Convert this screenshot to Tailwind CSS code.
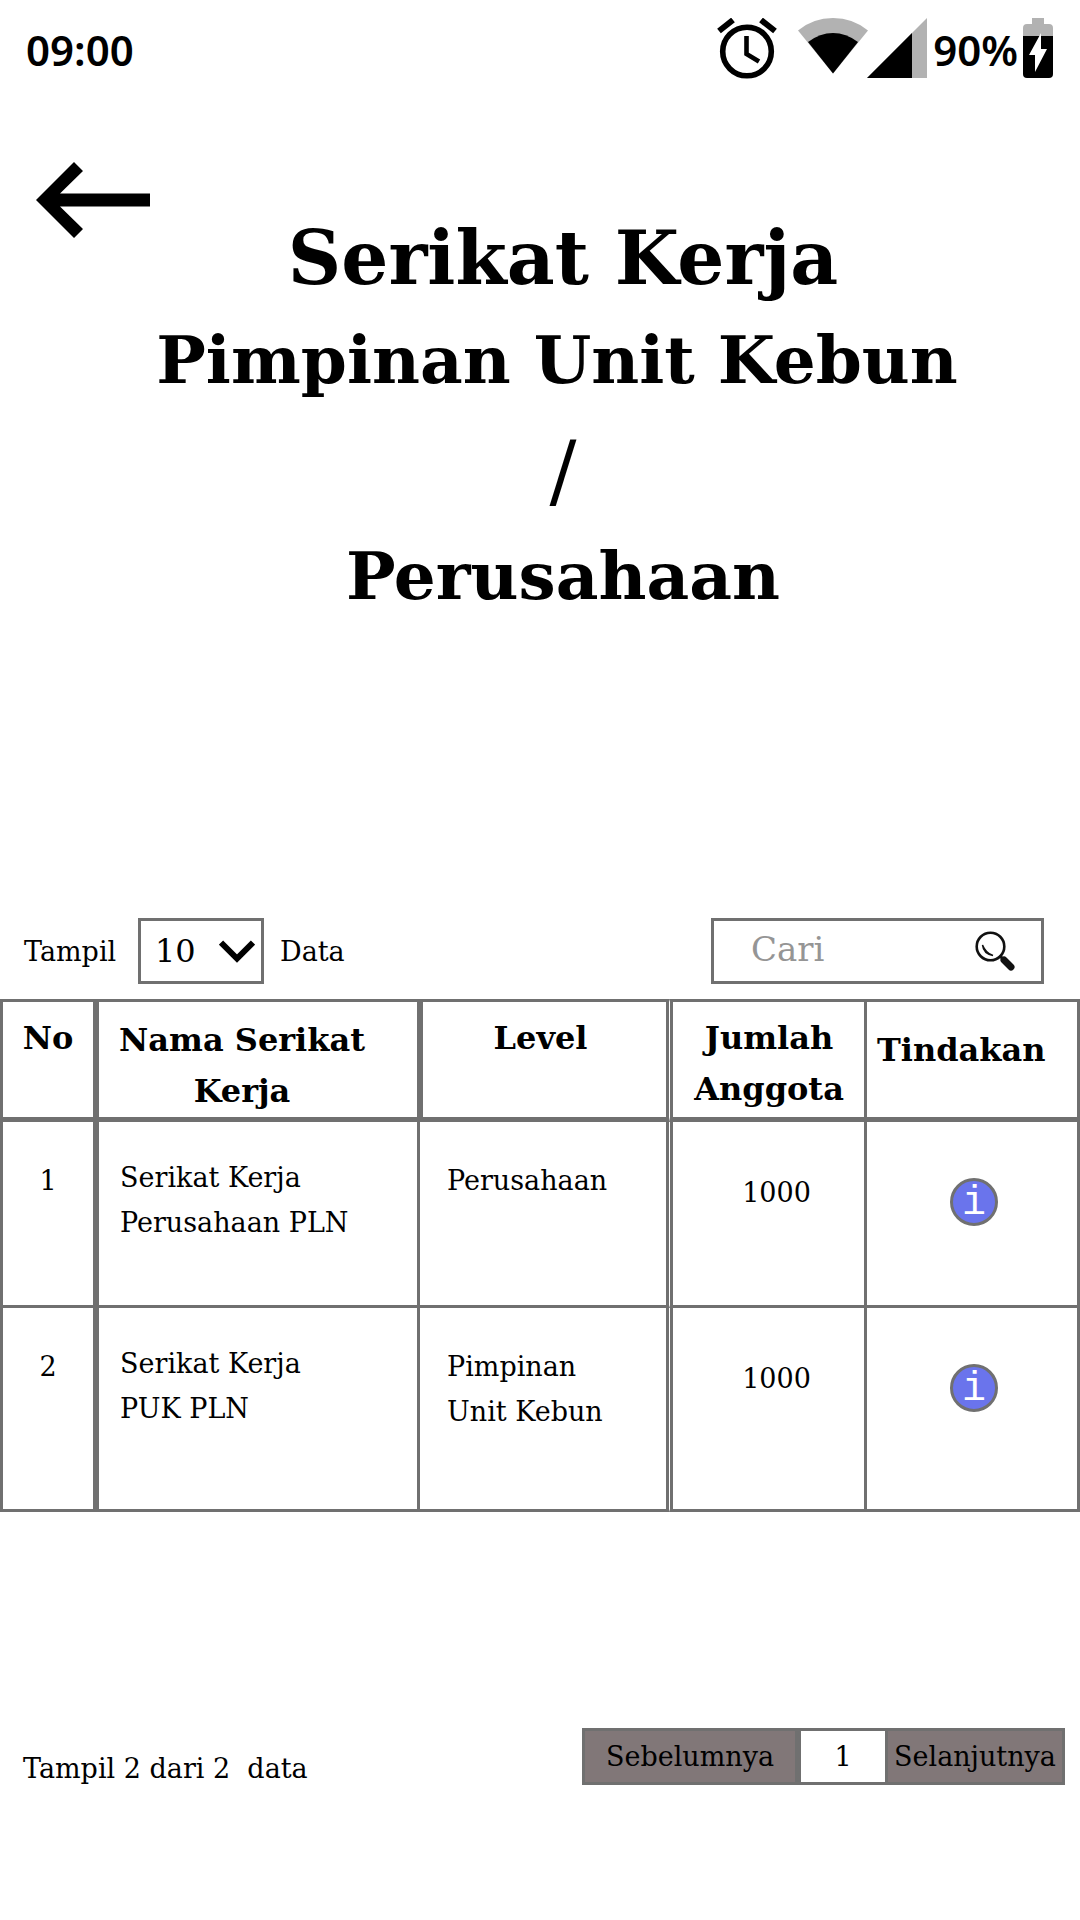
<!DOCTYPE html>
<html lang="id">
<head>
<meta charset="utf-8">
<meta name="viewport" content="width=device-width, initial-scale=1">
<title>Serikat Kerja</title>
<script src="https://cdn.jsdelivr.net/npm/@tailwindcss/browser@4"></script>
</head>
<body class="min-h-screen bg-white text-black font-['DejaVu_Serif',serif] text-[27px] leading-[45px]">

<!-- Status bar -->
<div class="flex items-start justify-between pt-[18px] pl-[26px] pr-[27px] font-['Noto_Sans',sans-serif] font-semibold text-[42px] leading-[64px]">
  <time>09:00</time>
  <div class="flex items-start">
    <svg class="w-[60px] h-[62px] mr-[21px]" viewBox="717 18 60 62" fill="none" stroke="#000" aria-hidden="true">
      <circle cx="747" cy="51.5" r="24.3" stroke-width="5.6"/>
      <path d="M719 31 733 20M775 31 761 20" stroke-width="6"/>
      <path d="M746.500 36V54L759 61.500" stroke-width="4.600"/>
    </svg>
    <svg class="w-[70px] h-[60px] -mr-px" viewBox="798 18 70 60" aria-hidden="true">
      <path d="M798 30.500Q813 18 833 18T868 30.500L833 73.500Z" fill="#b2b2b2"/>
      <path d="M808 42Q820 33 833 33T858 42L833 73.500Z"/>
    </svg>
    <svg class="w-[60px] h-[60px] mr-1.5" viewBox="0 0 60 60" aria-hidden="true">
      <path d="M60 0V60H0Z" fill="#b2b2b2"/>
      <path d="M45 15V60H0Z"/>
    </svg>
    <span>90%</span>
    <svg class="w-[30px] h-[60px] ml-[5px]" viewBox="0 0 30 60" aria-hidden="true">
      <path d="M9 0H21V6H26Q30 6 30 10V18H0V10Q0 6 4 6H9Z" fill="#b2b2b2"/>
      <path d="M0 18H30V56Q30 60 26 60H4Q0 60 0 56Z"/>
      <path d="M18 15V31H24L12 54V37H6Z" fill="#fff"/>
    </svg>
  </div>
</div>

<!-- Back link and heading share one grid cell -->
<header class="grid pt-20">
  <a href="#" aria-label="Kembali" class="col-start-1 row-start-1 justify-self-start ml-9 z-10">
    <svg class="w-[114px] h-[76px]" viewBox="36 162 114 76" aria-hidden="true">
      <path d="M36 200 74 162 83 171 60 193.500H150V206.500H60L83 229 74 238Z"/>
    </svg>
  </a>
  <h1 class="col-start-1 row-start-1 pt-12 pl-[46px] text-center font-bold text-[66px]">
    <span class="block text-[74px] leading-[96px]">Serikat Kerja</span>
    <span class="block -ml-3 leading-[108px]">Pimpinan Unit Kebun</span>
    <span class="block text-[80px] leading-[116px] font-normal">/</span>
    <span class="block leading-[92px]">Perusahaan</span>
  </h1>
</header>

<main>
  <div class="flex items-center justify-between mt-[296px] pl-6 pr-9">
    <div class="flex items-center">
      <label for="jumlah" class="w-[114px]">Tampil</label>
      <div class="grid items-center w-[126px] h-[66px]">
        <select id="jumlah" class="col-start-1 row-start-1 size-full appearance-none border-3 border-[#707070] bg-white pl-3.5 text-[32px]">
          <option>10</option>
          <option>25</option>
          <option>50</option>
        </select>
        <svg class="col-start-1 row-start-1 justify-self-end w-9 h-[23px] mr-[9px] pointer-events-none" viewBox="0 0 36 23" fill="none" stroke="#000" stroke-width="6" aria-hidden="true">
          <path d="M2 2.500 18 18.500 34 2.500"/>
        </svg>
      </div>
      <span class="ml-4">Data</span>
    </div>
    <form class="grid items-center w-[333px] h-[66px]" role="search">
      <input type="search" aria-label="Cari" placeholder="Cari" class="col-start-1 row-start-1 size-full border-3 border-[#707070] bg-white pl-[37px] pr-16 pb-1 text-[34px] placeholder:text-[#959595]">
      <button type="button" aria-label="Cari data" class="col-start-1 row-start-1 justify-self-end mr-[29px]">
        <svg class="w-10 h-10" viewBox="0 0 40 40" fill="none" stroke="#111" stroke-linecap="round" aria-hidden="true">
          <circle cx="15.500" cy="15.500" r="13.800" stroke-width="2.600"/>
          <path d="M7.500 14Q8.500 23 18 24.500Q11 22.500 7.500 14Z" stroke-width="1.500" fill="#111"/>
          <path d="M25.500 25.500 29 29" stroke-width="3"/>
          <path d="M29 29 36 36" stroke-width="7"/>
        </svg>
      </button>
    </form>
  </div>

  <table class="mt-[15px] w-full table-fixed border-separate border-spacing-0 [&_td]:align-top [&_th]:align-top [&_td]:border-[#707070] [&_th]:border-[#707070]">
    <colgroup>
      <col class="w-[9.17%]">
      <col class="w-[29.72%]">
      <col class="w-[23.06%]">
      <col class="w-[18.33%]">
      <col>
    </colgroup>
    <thead class="text-[32px] leading-[51px]">
      <tr class="h-[123px]">
        <th class="border-t-3 border-b-5 border-l-3 border-r-6 pt-[11px]">No</th>
        <th class="border-t-3 border-b-5 border-r-3 pt-[13px] pr-8">Nama Serikat Kerja</th>
        <th class="border-t-3 border-b-5 border-l-3 border-r-3 pt-[11px] pr-2">Level</th>
        <th class="border-t-3 border-b-5 border-r-3 border-l border-l-white! shadow-[inset_3px_0_0_#707070] pt-[11px] pl-1">Jumlah Anggota</th>
        <th class="border-t-3 border-b-5 border-r-3 pt-[23px] pl-2.5 text-left">Tindakan</th>
      </tr>
    </thead>
    <tbody>
      <tr class="h-[186px]">
        <td class="border-b-3 border-l-3 border-r-6 pt-9 text-center">1</td>
        <td class="border-b-3 border-r-3 pt-[33px] pl-[21px] pr-12">Serikat Kerja<br>Perusahaan PLN</td>
        <td class="border-b-3 border-r-3 pt-9 pl-[27px]">Perusahaan</td>
        <td class="border-b-3 border-r-3 border-l border-l-white! shadow-[inset_3px_0_0_#707070] pt-12 pl-[19px] text-center">1000</td>
        <td class="border-b-3 border-r-3 pt-14 pl-1">
          <button type="button" aria-label="Info" class="mx-auto flex size-12 items-center justify-center rounded-full border-3 border-[#707070] bg-[#6a74ec] font-['Liberation_Mono',monospace] text-[40px] leading-[42px] text-white"><span class="pt-1">i</span></button>
        </td>
      </tr>
      <tr class="h-[204px]">
        <td class="border-b-3 border-l-3 border-r-6 pt-9 text-center">2</td>
        <td class="border-b-3 border-r-3 pt-[33px] pl-[21px] pr-12">Serikat Kerja<br>PUK PLN</td>
        <td class="border-b-3 border-r-3 pt-9 pl-[27px]">Pimpinan<br>Unit Kebun</td>
        <td class="border-b-3 border-r-3 border-l border-l-white! shadow-[inset_3px_0_0_#707070] pt-12 pl-[19px] text-center">1000</td>
        <td class="border-b-3 border-r-3 pt-14 pl-1">
          <button type="button" aria-label="Info" class="mx-auto flex size-12 items-center justify-center rounded-full border-3 border-[#707070] bg-[#6a74ec] font-['Liberation_Mono',monospace] text-[40px] leading-[42px] text-white"><span class="pt-1">i</span></button>
        </td>
      </tr>
    </tbody>
  </table>
</main>

<footer class="flex items-end justify-between mt-[216px] pl-[23px] pr-[15px]">
  <p class="leading-8 whitespace-pre">Tampil 2 dari 2  data</p>
  <nav class="flex h-[57px]" aria-label="Halaman">
    <button type="button" class="w-[216px] border-3 border-[#707070] bg-[#817778]">Sebelumnya</button>
    <button type="button" aria-current="page" class="w-[90px] border-3 border-[#707070] bg-white">1</button>
    <button type="button" class="w-[177px] border-y-3 border-r-3 border-[#707070] bg-[#817778]">Selanjutnya</button>
  </nav>
</footer>

</body>
</html>
